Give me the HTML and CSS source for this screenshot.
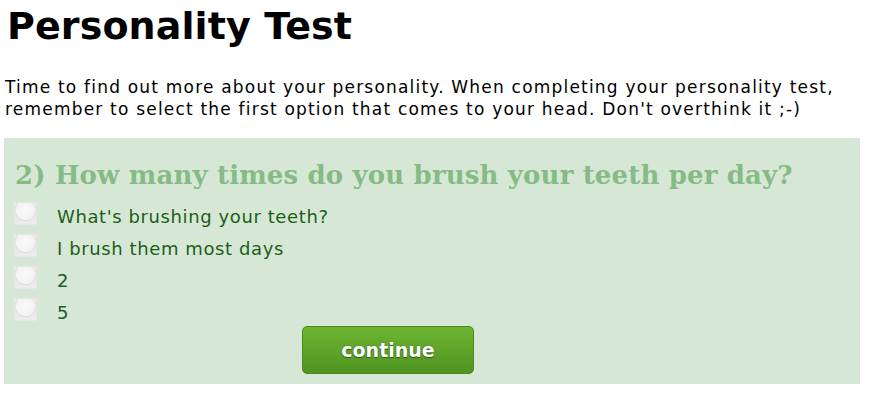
FILE: index.html
```html
<!DOCTYPE html>
<html>
<head>
<meta charset="utf-8">
<link rel="stylesheet" href="styles.css">
</head>
<body>
<h1 class="title">Personality Test</h1>
<p class="intro">Time to find out more about your personality. When completing your personality test, remember to select the first option that comes to your head. Don't overthink it ;-)</p>
<form class="quiz">
  <h2 class="question">2) How many times do you brush your teeth per day?</h2>
  <ul class="options">
    <li class="option"><span class="box"></span><span class="label">What's brushing your teeth?</span></li>
    <li class="option"><span class="box"></span><span class="label">I brush them most days</span></li>
    <li class="option"><span class="box"></span><span class="label">2</span></li>
    <li class="option"><span class="box"></span><span class="label">5</span></li>
  </ul>
  <div class="actions"><button type="button" class="continue">continue</button></div>
</form>
</body>
</html>
```
FILE: styles.css
```css
html, body { margin: 0; padding: 0; background: #fff; }
body { padding: 0 13px 0 4px; font-family: "DejaVu Sans", Verdana, sans-serif; }
.title { margin: 0; padding: 4px 0 0 3px; font-size: 38px; line-height: 44px; font-weight: bold; color: #000; letter-spacing: 0.1px; }
.intro { margin: 28px 0 0 1px; font-size: 17px; line-height: 22px; letter-spacing: 1.2px; color: #000; }
.quiz { margin-top: 18px; background: #d6e8d5; padding: 19px 10px 10px 10px; }
.question { margin: 0; font-family: "DejaVu Serif", Georgia, serif; font-weight: bold; font-size: 26px; line-height: 36px; color: #86bb86; padding-left: 1px; letter-spacing: 0.15px; }
.options { list-style: none; margin: 7px 0 0 0; padding: 0; }
.option { display: flex; align-items: center; height: 32px; }
.box { width: 23px; height: 23px; box-sizing: border-box; background: radial-gradient(circle at 50% 35%, #fafafa 0, #f2f2f2 55%, #dcdcdc 60%, #ececec 66%); border: 1px solid #e6e6e6; margin-right: 20px; margin-top: -6px; }
.label { font-size: 18px; letter-spacing: 0.6px; color: #1d5e1a; }
.actions { display: flex; padding-left: 288px; margin-top: -2px; }
.continue { width: 172px; height: 48px; border: 1px solid #4a8a1e; border-radius: 5px; background: linear-gradient(#6db531, #4f9420); color: #fff; font-family: "DejaVu Sans", Verdana, sans-serif; font-weight: bold; font-size: 19px; text-shadow: 0 1px 1px #2d5a10, 0 0 1px #2d5a10; }
```
